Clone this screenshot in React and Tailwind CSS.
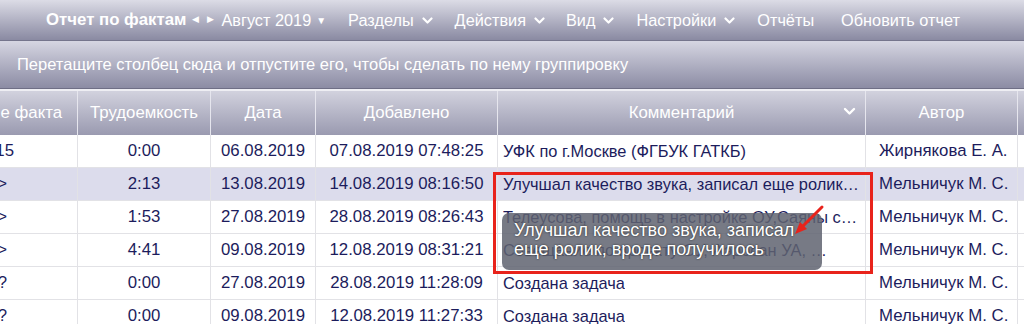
import React from "react";

const rows = [
  { c1: "2015", c1pad: "pr-[63px]", t: "0:00", d: "06.08.2019", a: "07.08.2019 07:48:25", k: "УФК по г.Москве (ФГБУК ГАТКБ)", au: "Жирнякова Е. А.", hl: false },
  { c1: "Задача >", c1pad: "pr-[70px]", t: "2:13", d: "13.08.2019", a: "14.08.2019 08:16:50", k: "Улучшал качество звука, записал еще ролик, вроде получилось", au: "Мельничук М. С.", hl: true },
  { c1: "Задача >", c1pad: "pr-[70px]", t: "1:53", d: "27.08.2019", a: "28.08.2019 08:26:43", k: "Телеусова, помощь в настройке ОУ,Саяны с переносом данных", au: "Мельничук М. С.", hl: false },
  { c1: "Задача >", c1pad: "pr-[70px]", t: "4:41", d: "09.08.2019", a: "12.08.2019 08:31:21", k: "Совещание по проекту ОУ, Аэросан УА, …", au: "Мельничук М. С.", hl: false },
  { c1: "Задача ?", c1pad: "pr-[70px]", t: "0:00", d: "27.08.2019", a: "28.08.2019 11:28:09", k: "Создана задача", au: "Мельничук М. С.", hl: false },
  { c1: "Задача ?", c1pad: "pr-[70px]", t: "0:00", d: "09.08.2019", a: "12.08.2019 11:27:33", k: "Создана задача", au: "Мельничук М. С.", hl: false },
];

const Chevron = () => (
  <svg width="11" height="8" viewBox="0 0 11 8" className="ml-[8px] mt-[2px]">
    <path d="M1.5 1.5 L5.5 5.5 L9.5 1.5" fill="none" stroke="white" strokeWidth="2.2" strokeLinecap="round" strokeLinejoin="round" />
  </svg>
);

const grid = "grid grid-cols-[178px_133px_105px_182px_368px_152px_1fr]";

export default function App() {
  return (
    <div className="relative w-[1024px] h-[324px] overflow-hidden bg-white font-['Liberation_Sans',Arial,sans-serif]">
      {/* Top toolbar */}
      <div className="h-[41px] bg-gradient-to-b from-[#dcdce6] to-[#8a8aa2] border-b border-[#75758c] flex items-center pl-[46px] text-white text-[16.3px] whitespace-nowrap">
        <span className="font-bold text-[16.8px]">Отчет по фактам</span>
        <span className="ml-[6px] text-[9px]">◀</span>
        <span className="ml-[8px] text-[9px]">▶</span>
        <span className="ml-[7px]">Август 2019</span>
        <span className="ml-[5px] text-[10px]">▼</span>
        <span className="ml-[22px] flex items-center">Разделы<Chevron /></span>
        <span className="ml-[22px] flex items-center">Действия<Chevron /></span>
        <span className="ml-[21px] flex items-center">Вид<Chevron /></span>
        <span className="ml-[22px] flex items-center">Настройки<Chevron /></span>
        <span className="ml-[22px]">Отчёты</span>
        <span className="ml-[27px]">Обновить отчет</span>
      </div>

      {/* Grouping bar */}
      <div className="h-[48px] bg-gradient-to-b from-[#d6d6e2] to-[#8c8ca4] border-b border-[#6f6f86] flex items-center pl-[17px] text-white text-[16.5px] whitespace-nowrap">
        Перетащите столбец сюда и отпустите его, чтобы сделать по нему группировку
      </div>

      {/* Table */}
      <div className="overflow-hidden border-t-[2px] border-[#eeeef3]">
        <div className="-ml-[100px] w-[1124px]">
          <div className={`${grid} h-[44px] bg-gradient-to-b from-[#d2d2de] to-[#9a9ab0] text-white text-[16.8px]`}>
            <div className="flex items-center justify-end pr-[15px] whitespace-nowrap overflow-hidden border-r border-[#e6e6ee]">Наименование факта</div>
            <div className="flex items-center justify-center border-r border-[#e6e6ee]">Трудоемкость</div>
            <div className="flex items-center justify-center border-r border-[#e6e6ee]">Дата</div>
            <div className="flex items-center justify-center border-r border-[#e6e6ee]">Добавлено</div>
            <div className="relative flex items-center justify-center border-r border-[#e6e6ee]">
              Комментарий
              <span className="absolute right-[9px] top-[16px]">
                <svg width="13" height="9" viewBox="0 0 13 9">
                  <path d="M2 2 L6.5 6.5 L11 2" fill="none" stroke="white" strokeWidth="2.4" strokeLinecap="round" strokeLinejoin="round" />
                </svg>
              </span>
            </div>
            <div className="flex items-center justify-center border-r border-[#e6e6ee]">Автор</div>
            <div></div>
          </div>

          {rows.map((r, i) => (
            <div
              key={i}
              className={`${grid} h-[33px] text-[16.8px] text-[#1c1c5c] border-b border-[#e2e2e6] ${r.hl ? "bg-[#dcdcec]" : "bg-white"}`}
            >
              <div className={`flex items-center justify-end whitespace-nowrap overflow-hidden border-r border-[#e2e2e6] ${r.c1pad}`}>{r.c1}</div>
              <div className="flex items-center justify-center border-r border-[#e2e2e6]">{r.t}</div>
              <div className="flex items-center justify-center border-r border-[#e2e2e6]">{r.d}</div>
              <div className="flex items-center justify-center border-r border-[#e2e2e6]">{r.a}</div>
              <div className="flex items-center min-w-0 pl-[5px] pr-[5px] text-[16.4px] border-r border-[#e2e2e6]">
                <span className="truncate">{r.k}</span>
              </div>
              <div className="flex items-center pl-[13px] whitespace-nowrap border-r border-[#e2e2e6]">{r.au}</div>
              <div></div>
            </div>
          ))}
        </div>
      </div>

      {/* Tooltip overlay */}
      <div className="absolute left-[502px] top-[213px] w-[320px] h-[57px] rounded-[7px] bg-[#5f6370]/85 text-white text-[18px] leading-[19px] pt-[8px] pl-[12px] [text-shadow:0_0_2px_#222]">
        <div>Улучшал качество звука, записал</div>
        <div>еще ролик, вроде получилось</div>
      </div>

      {/* Red highlight box */}
      <div className="absolute left-[493px] top-[172px] w-[380px] h-[102px] border-[3px] border-[#e8231b]"></div>

      {/* Red arrow */}
      <svg className="absolute left-[780px] top-[195px]" width="50" height="45" viewBox="0 0 50 45">
        <line x1="42" y1="12" x2="22" y2="32" stroke="#e8231b" strokeWidth="3" strokeLinecap="round" />
        <polygon points="15,39 27,34 20,27" fill="#e8231b" />
      </svg>
    </div>
  );
}
